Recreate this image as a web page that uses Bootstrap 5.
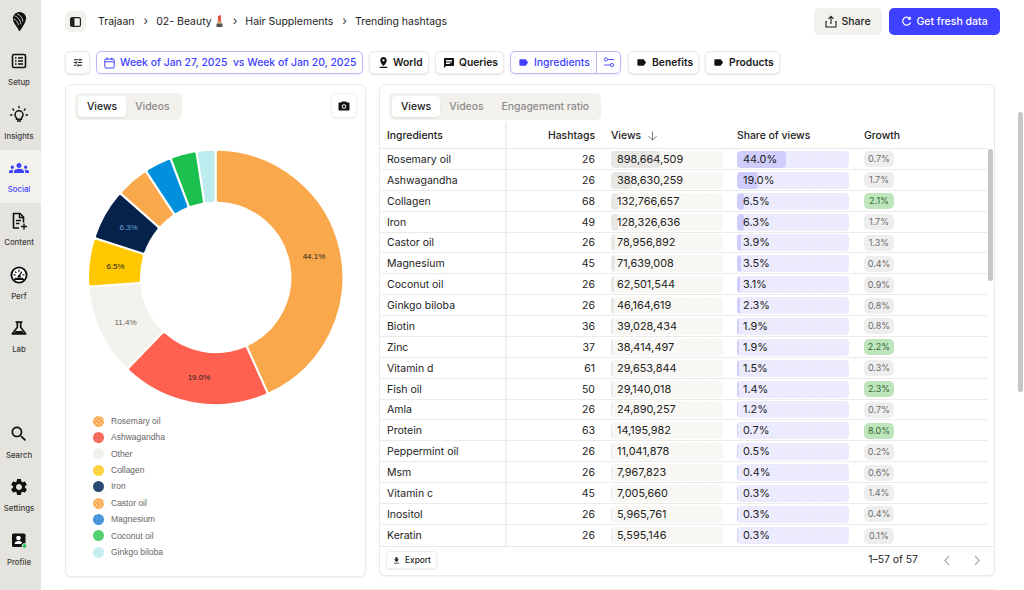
<!DOCTYPE html>
<html lang="en">
<head>
<meta charset="utf-8">
<title>Trending hashtags</title>
<link href="https://cdn.jsdelivr.net/npm/bootstrap@5.3.0/dist/css/bootstrap.min.css" rel="stylesheet">
<style>
html,body{height:590px;overflow:hidden}
body{font-family:Inter,"Liberation Sans",sans-serif;font-size:11px;color:#1f1f1f;background:#fff}
.app-shell{height:590px}
.side-rail{width:41px;flex:none;background:#e5e3dd;height:590px}
.rail-logo{height:43.4px;padding-right:2px}
.rail-item{height:53.3px;padding:8px 3px 0 0;color:#111;font-size:7.8px;font-weight:500;line-height:12px;text-decoration:none}
.rail-item svg{width:20px;height:20px;display:block;margin-bottom:5px}
.rail-item span{color:#3c3c3c}
.rail-active{background:#f3f1eb}
.rail-active span{color:#4040ff}
.rail-bottom{margin-top:auto;padding-bottom:14px}
.main-pane{flex:1;min-width:0;padding:8px 0 0 24px;position:relative}
.top-bar{height:27px;padding-right:24px}
.toggle-btn{width:21px;height:21px;background:#f3f1eb;border-radius:5px}
.crumbs{font-size:10.5px;margin:0 0 0 12px;--bs-breadcrumb-margin-bottom:0;--bs-breadcrumb-item-padding-x:0;line-height:14px}
.crumbs .breadcrumb-item{color:#222}
.crumbs .breadcrumb-item+.breadcrumb-item::before{content:"›";float:none;padding:0 8px 0 9px;color:#333;font-size:12px}
.act-btn{height:27px;font-size:10.5px;font-weight:500;border-radius:5px;border:0;padding:0 8px;line-height:27px;white-space:nowrap}
.act-share{background:#f3f1eb;color:#222;width:68px}
.act-fresh{background:#4040ff;color:#fff;width:111px;margin-left:7px}
.filter-row{margin-top:16px;height:23px;gap:6px}
.chip{height:23px;background:#fff;border:1px solid #ecebe8;border-radius:5px;box-shadow:0 1px 2px rgba(0,0,0,.12);font-size:10.3px;font-weight:600;color:#1a1a1a;padding:0 7px;line-height:21px;white-space:nowrap}
.chip svg{flex:none}
.chip-on{border-color:#b9b9fb;color:#4040ff;font-weight:500;font-size:10.4px;box-shadow:0 1px 2px rgba(64,64,255,.12)}
.chip-split{padding:0;overflow:hidden}
.chip-split>div{padding:0 6px 0 7px;height:21px}
.chip-split>div+div{border-left:1px solid #b9b9fb;padding:0 6px}
.panel-row{margin-top:10px;width:930px}
.panel{background:#fff;border:1px solid #edebe6;border-radius:6px;box-shadow:0 1px 2px rgba(0,0,0,.06)}
.panel-left{width:301px;height:493px;flex:none}
.panel-right{width:616px;height:492px;flex:none;margin-left:13px;position:relative}
.seg-tabs{background:#f3f1eb;border-radius:5px;height:27px;padding:3px;font-size:10.4px;font-weight:500;color:#8b8b8b;gap:0}
.seg-tab{padding:0 9px;line-height:21px;height:21px;border-radius:4px}
.seg-on{background:#fff;color:#222;box-shadow:0 1px 2px rgba(0,0,0,.08)}
.left-head{padding:8px 8px 0 9px}
.cam-btn{width:26px;height:25px;background:#fff;border:1px solid #f0efec;border-radius:4px;box-shadow:0 1px 2px rgba(0,0,0,.06)}
.donut-svg{display:block;margin-top:10px;width:299px;height:283px}
.donut-svg text{font-family:"Liberation Sans",Arial,sans-serif;font-size:8px;text-anchor:middle}
.legend-list{padding:0 0 0 27px;margin:0;list-style:none;font-family:"Liberation Sans",Arial,sans-serif;font-size:8.5px;color:#666}
.legend-list li{height:16.4px;gap:7px}
.legend-dot{width:11px;height:11px;border-radius:50%;flex:none;background-size:4px 4px}
.dot-wave{background-image:repeating-linear-gradient(60deg,rgba(255,255,255,.35) 0 1px,transparent 1px 3px)}
.dot-spot{background-image:radial-gradient(rgba(0,0,0,.22) .6px,transparent .8px)}
.right-head{padding:8px 0 0 9px}
.data-table{margin:2px 0 0;width:608px;table-layout:fixed;border-collapse:separate;border-spacing:0;font-size:10.5px;--bs-table-color:#222}
.data-table th{font-weight:500;height:27px;padding:1px 8px 0;border-bottom:1px solid #e8e8e6;vertical-align:middle;font-size:10.4px}
.data-table td{height:20.89px;padding:1px 8px 0;border-bottom:1px solid #ebebe9;vertical-align:middle;line-height:15px}
.data-table tr:last-child td{border-bottom:0}
.data-table .col-name{padding-left:7px;border-right:2px solid #f2f1ee}
.meter{height:17px;width:112px;border-radius:4px;position:relative;padding-left:6px;line-height:17px;font-size:10.9px;background-size:5px 5px;overflow:hidden}
.meter-fill{position:absolute;left:0;top:0;bottom:0;border-radius:4px}
.meter-txt{position:relative}
.meter-views{background-color:#f8f7f3;background-image:radial-gradient(rgba(255,255,255,.8) .7px,transparent .8px)}
.meter-views .meter-fill{background:#e8e7e3}
.meter-share{background-color:#ecebfe;background-image:radial-gradient(rgba(255,255,255,.55) .7px,transparent .8px)}
.meter-share .meter-fill{background:#cfcdfb}
.pill{display:block;width:30px;height:16px;line-height:16px;text-align:center;border-radius:5px;background:#eee;color:#6d6d6d;font-size:9px}
.pill-up{background:#bfe5bc;color:#2e6a36}
.table-foot{height:30px;padding:0 13px 2px 6px;border-top:1px solid #e8e8e6}
.export-btn{height:18px;padding:0 5px;font-size:8.3px;font-weight:500;line-height:16px;border:1px solid #efeeeb;border-radius:4px;background:#fff;box-shadow:0 1px 2px rgba(0,0,0,.08);color:#222}
.page-count{font-size:10.4px;color:#222}
.page-nav{margin-left:25px;gap:22px}
.thumb-inner{position:absolute;left:608px;top:64px;width:5px;height:132px;background:#c6c6c6;border-radius:3px}
.thumb-page{position:absolute;right:1px;top:112px;width:5px;height:280px;background:#c6c6c6;border-radius:3px}
.next-panel{margin-top:12px;width:930px;height:1px;border-width:1px 0 0;border-radius:0;box-shadow:none}
</style>
</head>
<body>
<div class="app-shell d-flex">
  <nav class="side-rail d-flex flex-column">
    <div class="rail-logo d-flex justify-content-center align-items-center">
      <svg width="15" height="21" viewBox="0 0 16 21"><path fill="#111" d="M7 .5C11 .2 15 2.500 15 7c0 4-3.500 9-6.500 13.500C7.600 21 7 20 6.600 18.800 5.500 15.500 1.500 13 1 8 .7 4.500 3 1 7 .5z"/><path fill="none" stroke="#e5e3dd" stroke-width=".9" d="M3 4.500c3 1 6 4 6.500 9M5.500 2.500c3 1 6 4 6 8M1.800 8c2.500 .5 4.500 3 5 6.500"/></svg>
    </div>
    <a class="rail-item d-flex flex-column align-items-center"><svg viewBox="0 0 20 20"><rect x="3.500" y="3.500" width="13" height="13" rx="1.500" fill="none" stroke="#111" stroke-width="1.600"/><path stroke="#111" stroke-width="1.300" d="M6 7h1.500M9 7h5M6 10h1.500M9 10h5M6 13h1.500M9 13h5"/></svg><span>Setup</span></a>
    <a class="rail-item d-flex flex-column align-items-center"><svg viewBox="0 0 20 20"><path fill="none" stroke="#111" stroke-width="1.500" d="M7.500 12.800c-1-.8-1.500-1.800-1.500-3a4 4 0 0 1 8 0c0 1.200-.5 2.200-1.500 3v1.400h-5zM8 16h4"/><path stroke="#111" stroke-width="1.400" stroke-linecap="round" d="M10 1.500v1.200M3.800 4l.9.9M16.200 4l-.9.9M1.500 10h1.400M17.100 10h1.400"/></svg><span>Insights</span></a>
    <a class="rail-item rail-active d-flex flex-column align-items-center"><svg viewBox="0 0 24 24"><path fill="#4040ff" d="M12 12.750c1.630 0 3.070.39 4.240.9 1.080.48 1.760 1.560 1.760 2.730V18H6v-1.610c0-1.180.68-2.260 1.760-2.730 1.170-.52 2.610-.91 4.240-.91zM4 13c1.100 0 2-.9 2-2s-.9-2-2-2-2 .9-2 2 .9 2 2 2zm1.130 1.100c-.37-.06-.74-.1-1.130-.1-.99 0-1.930.21-2.780.58C.48 14.900 0 15.620 0 16.430V18h4.500v-1.610c0-.83.23-1.610.63-2.290zM20 13c1.100 0 2-.9 2-2s-.9-2-2-2-2 .9-2 2 .9 2 2 2zm4 3.430c0-.81-.48-1.530-1.220-1.850-.85-.37-1.790-.58-2.780-.58-.39 0-.76.04-1.130.1.400.68.630 1.460.630 2.290V18H24v-1.570zM12 6c1.660 0 3 1.340 3 3s-1.340 3-3 3-3-1.340-3-3 1.340-3 3-3z"/></svg><span>Social</span></a>
    <a class="rail-item d-flex flex-column align-items-center"><svg viewBox="0 0 20 20"><path fill="none" stroke="#111" stroke-width="1.600" stroke-linejoin="round" d="M10 17H4.500V2.500h6.500l3.500 3.500v5.500"/><path fill="none" stroke="#111" stroke-width="1.400" d="M10.500 3v3.500h4M7 9.500h5M7 12.500h3.500M15 12.500v6M12 15.500h6"/></svg><span>Content</span></a>
    <a class="rail-item d-flex flex-column align-items-center"><svg viewBox="0 0 20 20"><circle cx="10" cy="10" r="7.600" fill="#fff" stroke="#111" stroke-width="1.900"/><path fill="#111" d="M4.500 15h11l-1.500-2.300H6z"/><circle cx="10.200" cy="11.300" r="1.500" fill="#111"/><path stroke="#111" stroke-width="1.200" stroke-linecap="round" d="M10.200 11l2.300-3.900M5 9.800h1.200M10 5.200v1.200M6.300 6.800l.8.8M14 9.800h1"/></svg><span>Perf</span></a>
    <a class="rail-item d-flex flex-column align-items-center"><svg viewBox="0 0 24 24"><path fill="#111" d="M13 11.330 18 18H6l5-6.670V6h2m2.960-2H8.040c-.42 0-.65.48-.39.81L9 6.500v4.170L3.200 18.400c-.49.660-.02 1.600.8 1.600h16c.82 0 1.290-.94.8-1.600L15 10.670V6.500l1.350-1.690c.26-.33.03-.81-.39-.81z"/><path fill="#111" d="M8 15.500h8l1.500 2.500h-11z"/></svg><span>Lab</span></a>
    <div class="rail-bottom">
      <a class="rail-item d-flex flex-column align-items-center"><svg viewBox="0 0 24 24"><path fill="#111" d="M15.500 14h-.79l-.28-.27C15.410 12.590 16 11.110 16 9.500 16 5.910 13.090 3 9.500 3S3 5.910 3 9.500 5.910 16 9.500 16c1.610 0 3.090-.59 4.230-1.570l.27.28v.79l5 4.990L20.490 19l-4.990-5zm-6 0C7.010 14 5 11.990 5 9.500S7.010 5 9.500 5 14 7.010 14 9.500 11.990 14 9.500 14z"/></svg><span>Search</span></a>
      <a class="rail-item d-flex flex-column align-items-center"><svg viewBox="0 0 24 24"><path fill="#111" d="M19.140 12.940c.04-.3.060-.61.060-.94 0-.32-.02-.64-.07-.94l2.030-1.580c.18-.14.230-.41.120-.61l-1.920-3.320c-.12-.22-.37-.29-.59-.22l-2.390.960c-.5-.38-1.030-.7-1.620-.94l-.36-2.540c-.04-.24-.24-.41-.48-.41h-3.840c-.24 0-.43.170-.47.410l-.36 2.540c-.59.240-1.130.570-1.620.940l-2.390-.96c-.22-.08-.47 0-.59.220L2.740 8.870c-.12.210-.08.470.12.610l2.030 1.580c-.05.3-.09.630-.09.940s.02.640.07.940l-2.030 1.580c-.18.140-.23.410-.12.610l1.920 3.320c.12.220.37.290.59.220l2.390-.96c.5.380 1.030.7 1.620.94l.36 2.540c.05.240.24.410.48.410h3.840c.24 0 .44-.17.47-.41l.36-2.540c.59-.24 1.130-.56 1.620-.94l2.390.96c.22.080.47 0 .59-.22l1.920-3.320c.12-.22.070-.47-.12-.61l-2.010-1.580zM12 15.600c-1.980 0-3.600-1.620-3.600-3.600s1.620-3.600 3.600-3.600 3.600 1.620 3.600 3.600-1.620 3.600-3.600 3.600z"/></svg><span>Settings</span></a>
      <a class="rail-item d-flex flex-column align-items-center"><svg viewBox="0 0 20 20"><rect x="3" y="2.500" width="13.500" height="13.500" rx="1.500" fill="#111"/><circle cx="9.500" cy="7" r="2.300" fill="#fff"/><path fill="#fff" d="M5.500 13c.3-2.200 2-3 4-3s3.200.6 3.700 1.500L12 13z"/><circle cx="15.500" cy="15" r="2.400" fill="#22c55e" stroke="#e5e3dd"/></svg><span>Profile</span></a>
    </div>
  </nav>

  <main class="main-pane">
    <header class="top-bar d-flex align-items-center">
      <div class="toggle-btn d-flex align-items-center justify-content-center"><svg width="11" height="10" viewBox="0 0 11 10"><rect x=".6" y=".6" width="9.800" height="8.800" rx="1.500" fill="none" stroke="#222" stroke-width="1.200"/><rect x="1" y="1" width="3.500" height="8" fill="#222"/></svg></div>
      <ol class="breadcrumb crumbs align-items-center">
        <li class="breadcrumb-item">Trajaan</li>
        <li class="breadcrumb-item">02- Beauty <svg width="9" height="12" viewBox="0 0 9 12" style="vertical-align:-2px"><path fill="#e8503f" d="M3 1l3-1v6H3z"/><rect x="2.500" y="6" width="4" height="2.500" fill="#d9a066"/><rect x="1.500" y="8.500" width="6" height="3.500" rx=".5" fill="#555"/></svg></li>
        <li class="breadcrumb-item">Hair Supplements</li>
        <li class="breadcrumb-item">Trending hashtags</li>
      </ol>
      <div class="ms-auto d-flex">
        <button class="btn act-btn act-share d-flex align-items-center justify-content-center gap-1"><svg width="12" height="13" viewBox="0 0 12 13" fill="none" stroke="#222" stroke-width="1.100"><path d="M6 9V1.500M3.500 3.800 6 1.300l2.500 2.500M2 6.500H1V12h10V6.500h-1"/></svg>Share</button>
        <button class="btn act-btn act-fresh d-flex align-items-center justify-content-center gap-1"><svg width="11" height="11" viewBox="0 0 11 11" fill="none" stroke="#fff" stroke-width="1.200"><path d="M9.500 6.500a4 4 0 1 1-.8-4M9.200 .8v2.400H6.800"/></svg>Get fresh data</button>
      </div>
    </header>

    <div class="filter-row d-flex">
      <div class="chip d-flex align-items-center justify-content-center" style="width:25px;padding:0"><svg width="12" height="11" viewBox="0 0 24 24"><path fill="#222" d="M3 17v2h6v-2H3zM3 5v2h10V5H3zm10 16v-2h8v-2h-8v-2h-2v6h2zM7 9v2H3v2h4v2h2V9H7zm14 4v-2H11v2h10zm-6-4h2V7h4V5h-4V3h-2v6z"/></svg></div>
      <div class="chip chip-on d-flex align-items-center" style="width:267px;gap:5px"><svg width="11" height="12" viewBox="0 0 11 12" fill="none" stroke="#4040ff" stroke-width="1"><rect x=".8" y="2" width="9.400" height="9" rx="1.200"/><path d="M.8 4.800h9.400M3.200 .5v2.500M7.800 .5v2.500"/></svg><span>Week of Jan 27, 2025&nbsp; vs Week of Jan 20, 2025</span></div>
      <div class="chip d-flex align-items-center" style="width:60px;gap:3px"><svg width="13" height="13" viewBox="0 0 24 24"><path fill="#111" d="M18 8c0-3.310-2.690-6-6-6S6 4.690 6 8c0 4.500 6 11 6 11s6-6.500 6-11zm-8 0c0-1.100.9-2 2-2s2 .9 2 2-.89 2-2 2c-1.100 0-2-.9-2-2zM5 20v2h14v-2H5z"/></svg>World</div>
      <div class="chip d-flex align-items-center" style="width:69px;gap:4px"><svg width="12" height="12" viewBox="0 0 24 24"><path fill="#111" d="M20 2H4c-1.100 0-2 .9-2 2v18l4-4h14c1.100 0 2-.9 2-2V4c0-1.100-.9-2-2-2zM6 9h12v2H6V9zm8 5H6v-2h8v2zm4-6H6V6h12v2z"/></svg>Queries</div>
      <div class="chip chip-on chip-split d-flex" style="width:111px"><div class="d-flex align-items-center flex-fill" style="gap:5px"><svg width="11" height="11" viewBox="0 0 24 24"><path fill="#4040ff" d="M17.630 5.840C17.270 5.330 16.670 5 16 5L5 5.010C3.900 5.010 3 5.900 3 7v10c0 1.100.9 1.990 2 1.990L16 19c.67 0 1.270-.33 1.630-.84L22 12l-4.370-6.160z"/></svg>Ingredients</div><div class="d-flex align-items-center"><svg width="12" height="11" viewBox="0 0 12 11" fill="none" stroke="#4040ff" stroke-width=".9"><circle cx="3" cy="2.500" r="1.600"/><path d="M5 2.500h6M1 8h6"/><circle cx="9" cy="8" r="1.600"/></svg></div></div>
      <div class="chip d-flex align-items-center" style="width:71px;gap:5px;margin-left:1px"><svg width="11" height="11" viewBox="0 0 24 24"><path fill="#111" d="M17.630 5.840C17.270 5.330 16.670 5 16 5L5 5.010C3.900 5.010 3 5.900 3 7v10c0 1.100.9 1.990 2 1.990L16 19c.67 0 1.270-.33 1.630-.84L22 12l-4.370-6.160z"/></svg>Benefits</div>
      <div class="chip d-flex align-items-center" style="width:75px;gap:5px"><svg width="11" height="11" viewBox="0 0 24 24"><path fill="#111" d="M17.630 5.840C17.270 5.330 16.670 5 16 5L5 5.010C3.900 5.010 3 5.900 3 7v10c0 1.100.9 1.990 2 1.990L16 19c.67 0 1.270-.33 1.630-.84L22 12l-4.370-6.160z"/></svg>Products</div>
    </div>

    <div class="panel-row d-flex">
      <section class="panel panel-left">
        <div class="left-head d-flex justify-content-between align-items-start">
          <div class="seg-tabs d-flex"><div class="seg-tab seg-on">Views</div><div class="seg-tab">Videos</div></div>
          <div class="cam-btn d-flex align-items-center justify-content-center"><svg width="12" height="12" viewBox="0 0 24 24"><path fill="#111" d="M21 5h-3.170L16 3H8L6.170 5H3c-1.100 0-2 .9-2 2v12c0 1.100.9 2 2 2h18c1.100 0 2-.9 2-2V7c0-1.100-.9-2-2-2z"/><circle cx="12" cy="13" r="4.500" fill="#fff"/><circle cx="12" cy="13" r="2.700" fill="#111"/></svg></div>
        </div>
        <svg class="donut-svg" id="donut" viewBox="0 0 299 283">
          <g id="donut-arcs"></g>
          <text x="248" y="129" fill="#222">44.1%</text>
          <text x="133" y="250" fill="#222">19.0%</text>
          <text x="59.500" y="195" fill="#666">11.4%</text>
          <text x="49.500" y="139" fill="#222">6.5%</text>
          <text x="62.500" y="100" fill="#6fa3d6">6.3%</text>
        </svg>
        <ul class="legend-list">
          <li class="d-flex align-items-center"><i class="legend-dot dot-wave" style="background-color:#f9a94b"></i>Rosemary oil</li>
          <li class="d-flex align-items-center"><i class="legend-dot dot-spot" style="background-color:#ff6f5f"></i>Ashwagandha</li>
          <li class="d-flex align-items-center"><i class="legend-dot" style="background-color:#f3f1ec"></i>Other</li>
          <li class="d-flex align-items-center"><i class="legend-dot" style="background-color:#ffd23f"></i>Collagen</li>
          <li class="d-flex align-items-center"><i class="legend-dot" style="background-color:#2a4a75"></i>Iron</li>
          <li class="d-flex align-items-center"><i class="legend-dot dot-wave" style="background-color:#f9a94b"></i>Castor oil</li>
          <li class="d-flex align-items-center"><i class="legend-dot dot-spot" style="background-color:#4a9be0"></i>Magnesium</li>
          <li class="d-flex align-items-center"><i class="legend-dot" style="background-color:#52cf70"></i>Coconut oil</li>
          <li class="d-flex align-items-center"><i class="legend-dot" style="background-color:#c5eef0"></i>Ginkgo biloba</li>
        </ul>
      </section>

      <section class="panel panel-right">
        <div class="right-head d-flex">
          <div class="seg-tabs d-flex"><div class="seg-tab seg-on">Views</div><div class="seg-tab">Videos</div><div class="seg-tab">Engagement ratio</div></div>
        </div>
        <table class="table data-table">
          <colgroup><col style="width:127px"><col style="width:96px"><col style="width:126px"><col style="width:127px"><col></colgroup>
          <thead><tr><th class="col-name">Ingredients</th><th class="text-end">Hashtags</th><th>Views <svg width="11" height="10" viewBox="0 0 11 10" fill="none" stroke="#777" stroke-width="1" style="margin-left:3px"><path d="M5.500 .5v8.500M1.500 5.200l4 4 4-4"/></svg></th><th>Share of views</th><th>Growth</th></tr></thead>
          <tbody>
<tr><td class="col-name">Rosemary oil</td><td class="text-end">26</td><td><div class="meter meter-views"><div class="meter-fill" style="width:44%"></div><span class="meter-txt">898,664,509</span></div></td><td><div class="meter meter-share"><div class="meter-fill" style="width:44%"></div><span class="meter-txt">44.0%</span></div></td><td><span class="pill">0.7%</span></td></tr>
<tr><td class="col-name">Ashwagandha</td><td class="text-end">26</td><td><div class="meter meter-views"><div class="meter-fill" style="width:19%"></div><span class="meter-txt">388,630,259</span></div></td><td><div class="meter meter-share"><div class="meter-fill" style="width:19%"></div><span class="meter-txt">19.0%</span></div></td><td><span class="pill">1.7%</span></td></tr>
<tr><td class="col-name">Collagen</td><td class="text-end">68</td><td><div class="meter meter-views"><div class="meter-fill" style="width:6.5%"></div><span class="meter-txt">132,766,657</span></div></td><td><div class="meter meter-share"><div class="meter-fill" style="width:6.5%"></div><span class="meter-txt">6.5%</span></div></td><td><span class="pill pill-up">2.1%</span></td></tr>
<tr><td class="col-name">Iron</td><td class="text-end">49</td><td><div class="meter meter-views"><div class="meter-fill" style="width:6.3%"></div><span class="meter-txt">128,326,636</span></div></td><td><div class="meter meter-share"><div class="meter-fill" style="width:6.3%"></div><span class="meter-txt">6.3%</span></div></td><td><span class="pill">1.7%</span></td></tr>
<tr><td class="col-name">Castor oil</td><td class="text-end">26</td><td><div class="meter meter-views"><div class="meter-fill" style="width:3.9%"></div><span class="meter-txt">78,956,892</span></div></td><td><div class="meter meter-share"><div class="meter-fill" style="width:3.9%"></div><span class="meter-txt">3.9%</span></div></td><td><span class="pill">1.3%</span></td></tr>
<tr><td class="col-name">Magnesium</td><td class="text-end">45</td><td><div class="meter meter-views"><div class="meter-fill" style="width:3.5%"></div><span class="meter-txt">71,639,008</span></div></td><td><div class="meter meter-share"><div class="meter-fill" style="width:3.5%"></div><span class="meter-txt">3.5%</span></div></td><td><span class="pill">0.4%</span></td></tr>
<tr><td class="col-name">Coconut oil</td><td class="text-end">26</td><td><div class="meter meter-views"><div class="meter-fill" style="width:3.1%"></div><span class="meter-txt">62,501,544</span></div></td><td><div class="meter meter-share"><div class="meter-fill" style="width:3.1%"></div><span class="meter-txt">3.1%</span></div></td><td><span class="pill">0.9%</span></td></tr>
<tr><td class="col-name">Ginkgo biloba</td><td class="text-end">26</td><td><div class="meter meter-views"><div class="meter-fill" style="width:2.3%"></div><span class="meter-txt">46,164,619</span></div></td><td><div class="meter meter-share"><div class="meter-fill" style="width:2.3%"></div><span class="meter-txt">2.3%</span></div></td><td><span class="pill">0.8%</span></td></tr>
<tr><td class="col-name">Biotin</td><td class="text-end">36</td><td><div class="meter meter-views"><div class="meter-fill" style="width:1.9%"></div><span class="meter-txt">39,028,434</span></div></td><td><div class="meter meter-share"><div class="meter-fill" style="width:1.9%"></div><span class="meter-txt">1.9%</span></div></td><td><span class="pill">0.8%</span></td></tr>
<tr><td class="col-name">Zinc</td><td class="text-end">37</td><td><div class="meter meter-views"><div class="meter-fill" style="width:1.9%"></div><span class="meter-txt">38,414,497</span></div></td><td><div class="meter meter-share"><div class="meter-fill" style="width:1.9%"></div><span class="meter-txt">1.9%</span></div></td><td><span class="pill pill-up">2.2%</span></td></tr>
<tr><td class="col-name">Vitamin d</td><td class="text-end">61</td><td><div class="meter meter-views"><div class="meter-fill" style="width:1.5%"></div><span class="meter-txt">29,653,844</span></div></td><td><div class="meter meter-share"><div class="meter-fill" style="width:1.5%"></div><span class="meter-txt">1.5%</span></div></td><td><span class="pill">0.3%</span></td></tr>
<tr><td class="col-name">Fish oil</td><td class="text-end">50</td><td><div class="meter meter-views"><div class="meter-fill" style="width:1.4%"></div><span class="meter-txt">29,140,018</span></div></td><td><div class="meter meter-share"><div class="meter-fill" style="width:1.4%"></div><span class="meter-txt">1.4%</span></div></td><td><span class="pill pill-up">2.3%</span></td></tr>
<tr><td class="col-name">Amla</td><td class="text-end">26</td><td><div class="meter meter-views"><div class="meter-fill" style="width:1.2%"></div><span class="meter-txt">24,890,257</span></div></td><td><div class="meter meter-share"><div class="meter-fill" style="width:1.2%"></div><span class="meter-txt">1.2%</span></div></td><td><span class="pill">0.7%</span></td></tr>
<tr><td class="col-name">Protein</td><td class="text-end">63</td><td><div class="meter meter-views"><div class="meter-fill" style="width:.7%"></div><span class="meter-txt">14,195,982</span></div></td><td><div class="meter meter-share"><div class="meter-fill" style="width:.7%"></div><span class="meter-txt">0.7%</span></div></td><td><span class="pill pill-up">8.0%</span></td></tr>
<tr><td class="col-name">Peppermint oil</td><td class="text-end">26</td><td><div class="meter meter-views"><div class="meter-fill" style="width:.5%"></div><span class="meter-txt">11,041,878</span></div></td><td><div class="meter meter-share"><div class="meter-fill" style="width:.5%"></div><span class="meter-txt">0.5%</span></div></td><td><span class="pill">0.2%</span></td></tr>
<tr><td class="col-name">Msm</td><td class="text-end">26</td><td><div class="meter meter-views"><div class="meter-fill" style="width:.4%"></div><span class="meter-txt">7,967,823</span></div></td><td><div class="meter meter-share"><div class="meter-fill" style="width:.4%"></div><span class="meter-txt">0.4%</span></div></td><td><span class="pill">0.6%</span></td></tr>
<tr><td class="col-name">Vitamin c</td><td class="text-end">45</td><td><div class="meter meter-views"><div class="meter-fill" style="width:.3%"></div><span class="meter-txt">7,005,660</span></div></td><td><div class="meter meter-share"><div class="meter-fill" style="width:.3%"></div><span class="meter-txt">0.3%</span></div></td><td><span class="pill">1.4%</span></td></tr>
<tr><td class="col-name">Inositol</td><td class="text-end">26</td><td><div class="meter meter-views"><div class="meter-fill" style="width:.3%"></div><span class="meter-txt">5,965,761</span></div></td><td><div class="meter meter-share"><div class="meter-fill" style="width:.3%"></div><span class="meter-txt">0.3%</span></div></td><td><span class="pill">0.4%</span></td></tr>
<tr><td class="col-name">Keratin</td><td class="text-end">26</td><td><div class="meter meter-views"><div class="meter-fill" style="width:.3%"></div><span class="meter-txt">5,595,146</span></div></td><td><div class="meter meter-share"><div class="meter-fill" style="width:.3%"></div><span class="meter-txt">0.3%</span></div></td><td><span class="pill">0.1%</span></td></tr>
          </tbody>
        </table>
        <div class="thumb-inner"></div>
        <div class="table-foot d-flex align-items-center">
          <button class="btn export-btn d-flex align-items-center gap-1"><svg width="9" height="9" viewBox="0 0 24 24"><path fill="#222" d="M19 9h-4V3H9v6H5l7 7 7-7zM5 18v2h14v-2H5z"/></svg>Export</button>
          <span class="page-count ms-auto">1–57 of 57</span>
          <div class="page-nav d-flex align-items-center"><svg width="8" height="11" viewBox="0 0 8 11" fill="none" stroke="#a8a8a8" stroke-width="1.100"><path d="M6 1 1.800 5.500 6 10"/></svg><svg width="8" height="11" viewBox="0 0 8 11" fill="none" stroke="#a8a8a8" stroke-width="1.100"><path d="M2 1l4.200 4.500L2 10"/></svg></div>
        </div>
      </section>
    </div>
    <div class="panel next-panel"></div>
    <div class="thumb-page"></div>
  </main>
</div>
<script>
(function(){
  var cx=149.7,cy=147.4,R=125.2,r=77.2,gap=2.6;
  var edges=[0,155.8,224,265.8,288,311.4,326.7,339.2,351.3,360];
  var colors=["#f9a94b","#ff6150","#f3f1ec","#ffc800","#05234a","#f9a94b","#0090de","#1bc04f","#bdecee"];
  function pt(rad,deg){var a=deg*Math.PI/180;return (cx+rad*Math.sin(a)).toFixed(2)+" "+(cy-rad*Math.cos(a)).toFixed(2);}
  var out="";
  for(var i=0;i<colors.length;i++){
    var a=edges[i],b=edges[i+1];
    var oa=gap/R*180/Math.PI, ia=gap/r*180/Math.PI;
    var large=(b-a)>180?1:0;
    out+='<path fill="'+colors[i]+'" stroke="'+colors[i]+'" stroke-width="3" stroke-linejoin="round" d="M'+pt(R,a+oa)+' A'+R+' '+R+' 0 '+large+' 1 '+pt(R,b-oa)+' L'+pt(r,b-ia)+' A'+r+' '+r+' 0 '+large+' 0 '+pt(r,a+ia)+' Z"/>';
  }
  document.getElementById("donut-arcs").innerHTML=out;
})();
</script>
<script src="https://cdn.jsdelivr.net/npm/bootstrap@5.3.0/dist/js/bootstrap.bundle.min.js"></script>
</body>
</html>
